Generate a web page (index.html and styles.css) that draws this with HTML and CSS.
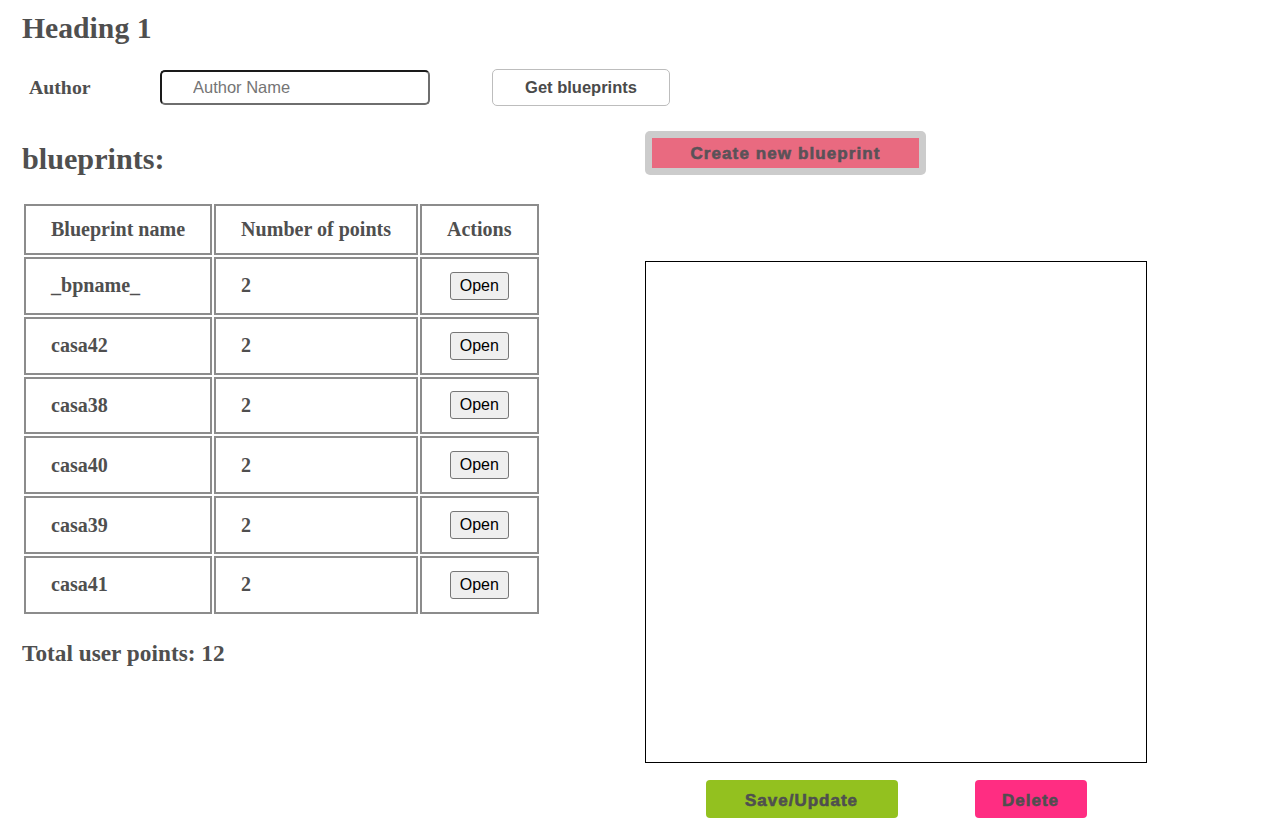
FILE: index.html
```html
<!DOCTYPE html>
<html>
<head>
<meta charset="utf-8">
<title>Blueprints</title>
<link rel="stylesheet" href="styles.css">
</head>
<body>
<div class="page">
  <h1 class="title">Heading 1</h1>
  <div class="author-row">
    <label class="author-label" for="author">Author</label>
    <input class="author-input" id="author" type="text" placeholder="Author Name">
    <button class="get-btn">Get blueprints</button>
  </div>
  <div class="main">
    <div class="left">
      <h2 class="subtitle">blueprints:</h2>
      <table class="bp-table">
        <thead>
          <tr><th>Blueprint name</th><th>Number of points</th><th>Actions</th></tr>
        </thead>
        <tbody>
          <tr><td>_bpname_</td><td>2</td><td class="act"><button class="open-btn">Open</button></td></tr>
          <tr><td>casa42</td><td>2</td><td class="act"><button class="open-btn">Open</button></td></tr>
          <tr><td>casa38</td><td>2</td><td class="act"><button class="open-btn">Open</button></td></tr>
          <tr><td>casa40</td><td>2</td><td class="act"><button class="open-btn">Open</button></td></tr>
          <tr><td>casa39</td><td>2</td><td class="act"><button class="open-btn">Open</button></td></tr>
          <tr><td>casa41</td><td>2</td><td class="act"><button class="open-btn">Open</button></td></tr>
        </tbody>
      </table>
      <h3 class="total">Total user points: 12</h3>
    </div>
    <div class="right">
      <div class="create-wrap"><button class="create-btn">Create new blueprint</button></div>
      <div class="canvas"></div>
      <div class="actions">
        <button class="save-btn">Save/Update</button>
        <button class="delete-btn">Delete</button>
      </div>
    </div>
  </div>
</div>
</body>
</html>
```
FILE: styles.css
```css
html, body {
  margin: 0;
  padding: 0;
  background: #ffffff;
}
body {
  font-family: "Liberation Serif", "Times New Roman", serif;
  color: #4f4f4f;
}
.page {
  padding: 12px 22px 0 22px;
}
.title {
  margin: 0;
  font-size: 29.7px;
  font-weight: bold;
  line-height: 33px;
  height: 33px;
}
.author-row {
  margin-top: 24px;
  display: flex;
  align-items: center;
  height: 37px;
}
.author-label {
  width: 131px;
  padding-left: 7px;
  font-size: 19.8px;
  font-weight: bold;
}
.author-input {
  box-sizing: border-box;
  width: 270px;
  height: 35px;
  margin: 0;
  padding: 0 0 0 31px;
  border: 2px solid;
  border-color: #1a1a1a #6e6e6e #6e6e6e #1a1a1a;
  border-radius: 5px;
  font-family: "Liberation Sans", Arial, sans-serif;
  font-size: 16.5px;
  color: #333;
  outline: none;
}
.author-input::placeholder {
  color: #757575;
}
.get-btn {
  box-sizing: border-box;
  margin-left: 62px;
  width: 178px;
  height: 37px;
  background: #ffffff;
  border: 1px solid #bdbdbd;
  border-radius: 5px;
  font-family: "Liberation Sans", Arial, sans-serif;
  font-size: 16.5px;
  font-weight: bold;
  color: #4a4a4a;
  padding: 0;
}
.main {
  margin-top: 25px;
  display: grid;
  grid-template-columns: 623px 502px;
}
.left {
  display: flex;
  flex-direction: column;
  align-items: flex-start;
}
.subtitle {
  margin: 12px 0 0 0;
  font-size: 30.2px;
  font-weight: bold;
  line-height: 33px;
}
.bp-table {
  margin-top: 26px;
  border-collapse: separate;
  border-spacing: 2px;
}
.bp-table th,
.bp-table td {
  border: 2px solid #8c8c8c;
  font-size: 20.05px;
  font-weight: bold;
  line-height: 23px;
  padding: 12px 25px;
}
.bp-table th {
  text-align: center;
}
.bp-table td {
  text-align: left;
  height: 29px;
  padding-top: 12.4px;
  padding-bottom: 12.4px;
}
.bp-table td.act {
  text-align: center;
}
.open-btn {
  box-sizing: border-box;
  height: 28px;
  padding: 0 9px;
  background: #efefef;
  border: 1px solid #767676;
  border-radius: 3px;
  font-family: "Liberation Sans", Arial, sans-serif;
  font-size: 16px;
  color: #000;
  vertical-align: middle;
}
.total {
  margin: 24px 0 0 0;
  font-size: 23.3px;
  font-weight: bold;
  line-height: 27px;
}
.right {
  display: flex;
  flex-direction: column;
  align-items: flex-start;
}
.create-wrap {
  box-sizing: border-box;
  width: 281px;
  height: 44px;
  padding: 7px;
  background: #cccccc;
  border-radius: 5px;
}
.create-btn {
  display: block;
  width: 100%;
  height: 100%;
  margin: 0;
  padding: 2px 0 0 0;
  border: none;
  background: #e96a80;
  font-family: "Liberation Sans", Arial, sans-serif;
  font-size: 17px;
  font-weight: bold;
  letter-spacing: 1.1px;
  -webkit-text-stroke: 0.6px #5a5258;
  color: #5a5258;
}
.canvas {
  box-sizing: border-box;
  margin-top: 86px;
  width: 502px;
  height: 502px;
  border: 1px solid #000;
  background: #fff;
}
.actions {
  margin-top: 17px;
  width: 502px;
  display: flex;
  justify-content: center;
  gap: 77px;
}
.save-btn,
.delete-btn {
  box-sizing: border-box;
  height: 38px;
  border: none;
  border-radius: 4px;
  padding: 3px 0 0 0;
  font-family: "Liberation Sans", Arial, sans-serif;
  font-size: 17px;
  font-weight: bold;
  letter-spacing: 1px;
  -webkit-text-stroke: 0.6px #4f4f4f;
  color: #4f4f4f;
}
.save-btn {
  width: 192px;
  background: #93c11f;
}
.delete-btn {
  width: 112px;
  background: #ff2d82;
}
```
